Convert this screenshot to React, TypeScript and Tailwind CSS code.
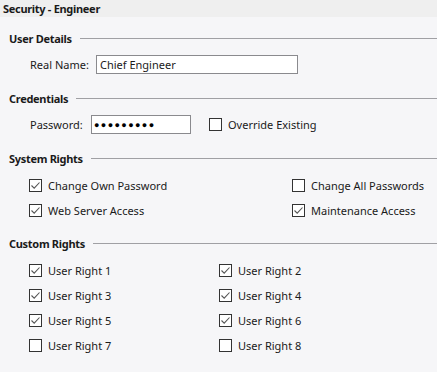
import React from "react";

const font = { fontFamily: '"Segoe UI", "Noto Sans", sans-serif' };

function Box({ checked }: { checked: boolean }) {
  return (
    <span className="flex h-[13px] w-[13px] shrink-0 items-center justify-center border border-[#333333] bg-white">
      {checked && (
        <svg width="11" height="11" viewBox="0 0 11 11" fill="none">
          <path d="M1.5 5.5 L4.2 8.2 L9.5 2.5" stroke="#555555" strokeWidth="1.1" />
        </svg>
      )}
    </span>
  );
}

function Check({ label, checked }: { label: string; checked: boolean }) {
  return (
    <label className="flex h-[25px] items-center gap-[6px]">
      <Box checked={checked} />
      <span className="pt-px">{label}</span>
    </label>
  );
}

function Heading({ title }: { title: string }) {
  return (
    <div className="flex h-4 items-center pl-[9px]">
      <span className="pt-px font-bold tracking-[-0.3px]">{title}</span>
      <div className="ml-[8px] h-px flex-1 bg-[#a0a0a4]" />
    </div>
  );
}

const custom = [
  ["User Right 1", true],
  ["User Right 2", true],
  ["User Right 3", true],
  ["User Right 4", true],
  ["User Right 5", true],
  ["User Right 6", true],
  ["User Right 7", false],
  ["User Right 8", false],
] as const;

export default function App() {
  return (
    <div
      className="h-[372px] w-[437px] overflow-hidden bg-[#f6f6f8] text-[11px] leading-4 text-[#1a1a1a]"
      style={font}
    >
      {/* Title */}
      <div className="flex h-[17px] items-center bg-[#efefef] pl-[3px] pt-px font-bold tracking-[-0.3px]">
        Security - Engineer
      </div>

      <div className="pt-[13px]">
        {/* User Details */}
        <Heading title="User Details" />
        <div className="mb-[13px] mt-[6px] flex h-[25px] items-center pl-[30px]">
          <span className="w-[66px] pt-px">Real Name:</span>
          <div className="flex h-[19px] w-[202px] items-center border border-[#8a8a8e] bg-white pl-[3px] pt-px">
            Chief Engineer
          </div>
        </div>

        {/* Credentials */}
        <Heading title="Credentials" />
        <div className="mb-[13px] mt-[6px] flex h-[25px] items-center pl-[30px]">
          <span className="w-[61px] pt-px">Password:</span>
          <div className="flex h-[19px] w-[100px] items-center border border-[#8a8a8e] bg-white pl-[2px] text-[9px] tracking-[1.4px] text-black">
            ●●●●●●●●●
          </div>
          <div className="ml-[18px]">
            <Check label="Override Existing" checked={false} />
          </div>
        </div>

        {/* System Rights */}
        <Heading title="System Rights" />
        <div className="mb-[12px] mt-[7px] grid grid-cols-[263px_1fr] pl-[29px]">
          <Check label="Change Own Password" checked />
          <Check label="Change All Passwords" checked={false} />
          <Check label="Web Server Access" checked />
          <Check label="Maintenance Access" checked />
        </div>

        {/* Custom Rights */}
        <Heading title="Custom Rights" />
        <div className="mt-[7px] grid grid-cols-[190px_1fr] pl-[29px]">
          {custom.map(([label, checked]) => (
            <Check key={label} label={label} checked={checked} />
          ))}
        </div>
      </div>
    </div>
  );
}
